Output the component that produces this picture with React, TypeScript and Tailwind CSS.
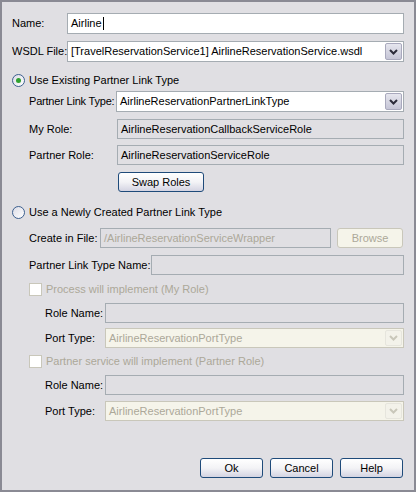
import React from "react";

const FONT = { fontFamily: '"Liberation Sans", Arial, sans-serif' };

function Chevron({ disabled }: { disabled?: boolean }) {
  return (
    <svg width="9" height="6" viewBox="0 0 9 6">
      <polyline
        points="1,1 4.5,4.5 8,1"
        fill="none"
        stroke={disabled ? "#c9c7ba" : "#2b2b3a"}
        strokeWidth="2"
      />
    </svg>
  );
}

function Combo({ value, disabled, className }: { value: string; disabled?: boolean; className?: string }) {
  return (
    <div
      className={
        "shrink-0 flex items-stretch border " +
        (disabled ? "border-[#c9c7ba] bg-[#f5f4ea] text-[#aca899] " : "border-[#a5acb2] bg-white text-black ") +
        (className ?? "")
      }
    >
      <div className="flex-1 flex items-center pl-[3px] whitespace-nowrap overflow-hidden">{value}</div>
      <div
        className={
          "m-px w-[17px] flex items-center justify-center rounded-[2px] border " +
          (disabled
            ? "border-[#e6e5dd] bg-[#f3f2ea]"
            : "border-[#a9a9bd] bg-gradient-to-b from-[#e6e6ee] to-[#c5c5d6]")
        }
      >
        <Chevron disabled={disabled} />
      </div>
    </div>
  );
}

function Field({ value, bg, gray, className }: { value?: string; bg?: string; gray?: boolean; className?: string }) {
  return (
    <div
      className={
        "shrink-0 flex items-center pl-[3px] border border-[#a5acb2] whitespace-nowrap overflow-hidden " +
        (bg ?? "bg-[#e0dfe3]") +
        " " +
        (gray ? "text-[#aca899] " : "text-black ") +
        (className ?? "")
      }
    >
      {value}
    </div>
  );
}

function Label({ children, className }: { children: React.ReactNode; className?: string }) {
  return <div className={"shrink-0 whitespace-nowrap " + (className ?? "")}>{children}</div>;
}

function Radio({ checked }: { checked?: boolean }) {
  return (
    <div className="shrink-0 w-[13px] h-[13px] rounded-full border border-[#3c5f8f] bg-gradient-to-br from-[#dcdce6] to-white flex items-center justify-center">
      {checked && <div className="w-[5px] h-[5px] rounded-full bg-[#2fa12f]" />}
    </div>
  );
}

function Check() {
  return <div className="shrink-0 w-[13px] h-[13px] border border-[#c9c7ba] bg-white" />;
}

function XPButton({ label, className, disabled }: { label: string; className?: string; disabled?: boolean }) {
  return (
    <div
      className={
        "shrink-0 flex items-center justify-center rounded-[3px] border " +
        (disabled
          ? "border-[#c9c7ba] bg-[#f5f4ea] text-[#aca899] "
          : "border-[#1f4b7a] bg-gradient-to-b from-white via-[#f3f3f6] to-[#d4d4e2] text-black ") +
        (className ?? "")
      }
    >
      {label}
    </div>
  );
}

export default function App() {
  return (
    <div
      style={FONT}
      className="w-[416px] h-[492px] bg-[#e0dfe3] text-[11px] text-black border-2 border-[#8a8a94] flex flex-col leading-none"
    >
      {/* Name */}
      <div className="mt-[11px] h-[21px] flex items-center">
        <Label className="w-[65px] pl-[10px]">Name:</Label>
        <div className="shrink-0 w-[337px] h-[21px] border border-[#a5acb2] bg-white flex items-center pl-[3px]">
          <span>Airline</span>
          <span className="inline-block w-px h-[13px] bg-black ml-px" />
        </div>
      </div>
      {/* WSDL */}
      <div className="mt-[7px] h-[21px] flex items-center">
        <Label className="w-[65px] pl-[10px]">WSDL File:</Label>
        <Combo
          value="[TravelReservationService1] AirlineReservationService.wsdl"
          className="w-[337px] h-[21px]"
        />
      </div>
      {/* Radio 1 */}
      <div className="mt-[10px] h-[16px] flex items-center pl-[10px] gap-[4px]">
        <Radio checked />
        <span className="whitespace-nowrap">Use Existing Partner Link Type</span>
      </div>
      {/* PLT */}
      <div className="mt-[3px] h-[21px] flex items-center">
        <Label className="w-[114px] pl-[27px] tracking-[-0.2px]">Partner Link Type:</Label>
        <Combo value="AirlineReservationPartnerLinkType" className="w-[288px] h-[21px]" />
      </div>
      <div className="mt-[7px] h-[20px] flex items-center">
        <Label className="w-[115px] pl-[27px]">My Role:</Label>
        <Field value="AirlineReservationCallbackServiceRole" className="w-[287px] h-[20px]" />
      </div>
      <div className="mt-[6px] h-[20px] flex items-center">
        <Label className="w-[115px] pl-[27px]">Partner Role:</Label>
        <Field value="AirlineReservationServiceRole" className="w-[287px] h-[20px]" />
      </div>
      <div className="mt-[7px] h-[20px] flex">
        <XPButton label="Swap Roles" className="ml-[116px] w-[86px] h-[20px]" />
      </div>
      {/* Radio 2 */}
      <div className="mt-[12px] h-[16px] flex items-center pl-[10px] gap-[4px]">
        <Radio />
        <span className="whitespace-nowrap">Use a Newly Created Partner Link Type</span>
      </div>
      <div className="mt-[8px] h-[20px] flex items-center">
        <Label className="w-[98px] pl-[27px]">Create in File:</Label>
        <Field value="/AirlineReservationServiceWrapper" gray className="w-[231px] h-[20px]" />
        <XPButton label="Browse" disabled className="ml-[6px] w-[66px] h-[20px]" />
      </div>
      <div className="mt-[7px] h-[20px] flex items-center">
        <Label className="w-[149px] pl-[27px]">Partner Link Type Name:</Label>
        <Field className="w-[253px] h-[20px]" />
      </div>
      <div className="mt-[6px] h-[16px] flex items-center pl-[27px] gap-[4px] text-[#aca899]">
        <Check />
        <span className="whitespace-nowrap">Process will implement (My Role)</span>
      </div>
      <div className="mt-[6px] h-[20px] flex items-center">
        <Label className="w-[103px] pl-[43px]">Role Name:</Label>
        <Field className="w-[299px] h-[20px]" />
      </div>
      <div className="mt-[5px] h-[20px] flex items-center">
        <Label className="w-[103px] pl-[43px]">Port Type:</Label>
        <Combo value="AirlineReservationPortType" disabled className="w-[299px] h-[20px]" />
      </div>
      <div className="mt-[5px] h-[16px] flex items-center pl-[27px] gap-[4px] text-[#aca899]">
        <Check />
        <span className="whitespace-nowrap">Partner service will implement (Partner Role)</span>
      </div>
      <div className="mt-[6px] h-[20px] flex items-center">
        <Label className="w-[103px] pl-[43px]">Role Name:</Label>
        <Field className="w-[299px] h-[20px]" />
      </div>
      <div className="mt-[6px] h-[20px] flex items-center">
        <Label className="w-[103px] pl-[43px]">Port Type:</Label>
        <Combo value="AirlineReservationPortType" disabled className="w-[299px] h-[20px]" />
      </div>
      <div className="mt-[37px] h-[20px] flex justify-end pr-[11px] gap-[7px]">
        <XPButton label="Ok" className="w-[63px] h-[20px]" />
        <XPButton label="Cancel" className="w-[63px] h-[20px]" />
        <XPButton label="Help" className="w-[63px] h-[20px]" />
      </div>
    </div>
  );
}
